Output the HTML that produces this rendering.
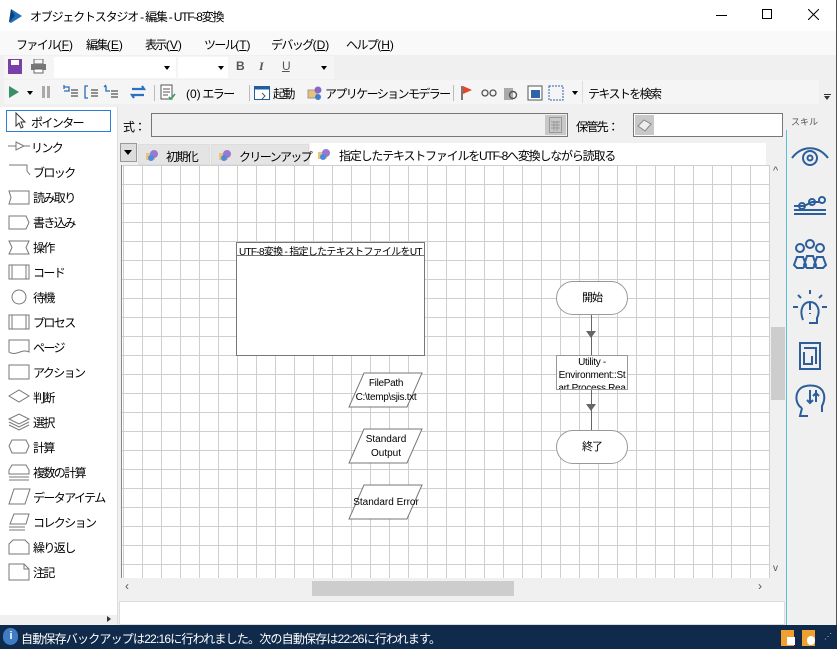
<!DOCTYPE html>
<html><head><meta charset="utf-8"><style>
*{margin:0;padding:0;box-sizing:border-box}
body{width:837px;height:649px;overflow:hidden;background:#f0f0f0;font-family:"Liberation Sans","Noto Sans CJK JP",sans-serif;font-size:12px;letter-spacing:-1px;color:#000;position:relative}
.a{position:absolute}
.t{white-space:nowrap}
.l{letter-spacing:-1.6px}
.n{letter-spacing:0}
</style></head><body>
<!-- title bar -->
<div class="a" style="left:0;top:0;width:837px;height:31px;background:#fff"></div>
<svg class="a" style="left:9px;top:8px" width="14" height="16"><path d="M2 1 L13 8 L2 15 L0 14 Z" fill="#1f6fb8"/><path d="M2 1 L6 8 L0 14 Z" fill="#0d3f7a"/></svg>
<div class="a t" style="left:30px;top:8px;letter-spacing:-1.2px">オブジェクトスタジオ  - 編集 - UTF-8変換</div>
<div class="a" style="left:716px;top:15px;width:11px;height:1px;background:#000"></div>
<div class="a" style="left:762px;top:9px;width:10px;height:10px;border:1px solid #000"></div>
<svg class="a" style="left:808px;top:9px" width="11" height="11"><path d="M0 0L11 11M11 0L0 11" stroke="#000" stroke-width="1"/></svg>
<div class="a" style="left:836px;top:0;width:1px;height:649px;background:#555"></div>
<!-- menu -->
<div class="a" style="left:0;top:31px;width:836px;height:24px;background:#f9f9f9"></div>
<div class="a t l" style="left:16px;top:36px">ファイル<span class="n">(<u>F</u>)</span></div>
<div class="a t l" style="left:86px;top:36px">編集<span class="n">(<u>E</u>)</span></div>
<div class="a t l" style="left:145px;top:36px">表示<span class="n">(<u>V</u>)</span></div>
<div class="a t l" style="left:204px;top:36px">ツール<span class="n">(<u>T</u>)</span></div>
<div class="a t l" style="left:271px;top:36px">デバッグ<span class="n">(<u>D</u>)</span></div>
<div class="a t l" style="left:346px;top:36px">ヘルプ<span class="n">(<u>H</u>)</span></div>
<!-- toolbar1 -->
<div class="a" style="left:4px;top:56px;width:330px;height:23px;background:#f5f5f5"></div>
<div class="a" style="left:8px;top:59px;width:14px;height:15px;background:#7b3fa8"></div><div class="a" style="left:11px;top:60px;width:8px;height:5px;background:#fff"></div>
<svg class="a" style="left:31px;top:59px" width="15" height="15"><rect x="3" y="0" width="9" height="5" fill="none" stroke="#666"/><rect x="0" y="5" width="15" height="6" fill="#777"/><rect x="3" y="10" width="9" height="4" fill="#fff" stroke="#666"/></svg>
<div class="a" style="left:54px;top:57px;width:122px;height:21px;background:#fff"></div>
<div class="a" style="left:164px;top:66px;border:3px solid transparent;border-top:4px solid #000"></div>
<div class="a" style="left:178px;top:57px;width:50px;height:21px;background:#fff"></div>
<div class="a" style="left:218px;top:66px;border:3px solid transparent;border-top:4px solid #000"></div>
<div class="a t" style="left:236px;top:59px;font-weight:bold;color:#555;font-size:12px">B</div>
<div class="a t" style="left:259px;top:59px;font-style:italic;font-weight:bold;color:#555;font-size:12px;font-family:'Liberation Serif',serif">I</div>
<div class="a t" style="left:282px;top:59px;text-decoration:underline;color:#555;font-size:12px">U</div>
<div class="a" style="left:321px;top:66px;border:3px solid transparent;border-top:4px solid #000"></div>
<!-- toolbar2 -->
<div class="a" style="left:4px;top:80px;width:815px;height:24px;background:#f5f5f5"></div>
<svg class="a" style="left:8px;top:85px" width="12" height="14"><path d="M1 1L11 7L1 13Z" fill="#3a8e6a"/></svg>
<div class="a" style="left:27px;top:91px;border:3px solid transparent;border-top:4px solid #000"></div>
<div class="a" style="left:42px;top:86px;width:3px;height:12px;background:#aaa"></div><div class="a" style="left:47px;top:86px;width:3px;height:12px;background:#aaa"></div>
<svg class="a" style="left:61px;top:84px" width="90" height="16" fill="none" stroke="#2c6db0" stroke-width="1.3"><path d="M3 3h5v4h-5M3 1v4"/><path d="M10 6h7M10 9h7M10 12h7" stroke="#555"/><path d="M27 2h-3v12h3"/><path d="M30 6h7M30 9h7M30 12h7" stroke="#555"/><path d="M45 2v5h4M45 1l-2 2"/><path d="M50 7h7M50 10h7M50 13h7" stroke="#555"/><path d="M71 5h12l-2-3M83 11h-12l2 3" stroke-width="2.2" stroke="#2a72c0"/></svg>
<div class="a" style="left:154px;top:85px;width:1px;height:16px;background:#bbb"></div>
<svg class="a" style="left:160px;top:84px" width="16" height="17"><rect x="1" y="1" width="11" height="14" fill="#fff" stroke="#555"/><path d="M3 5h7M3 8h7M3 11h5" stroke="#555"/><path d="M9 13l2 2 4-5" stroke="#3a9e5a" stroke-width="1.6" fill="none"/></svg>
<div class="a t l" style="left:186px;top:85px"><span class="n">(0)</span>  エラー</div>
<div class="a" style="left:249px;top:85px;width:1px;height:16px;background:#bbb"></div>
<svg class="a" style="left:254px;top:85px" width="16" height="16"><rect x="0.5" y="1.5" width="15" height="13" fill="#fff" stroke="#1f5f9f"/><rect x="0.5" y="1.5" width="15" height="3" fill="#1f5f9f"/><path d="M8 8l3 3-3 3" stroke="#555" fill="none"/></svg>
<div class="a t l" style="left:273px;top:85px">起動</div>
<svg class="a" style="left:307px;top:85px" width="16" height="16"><rect x="1" y="5" width="9" height="8" fill="#e8c27a" stroke="#999"/><circle cx="11" cy="5" r="3.5" fill="#8b66c4"/><circle cx="11" cy="12" r="3" fill="#3f80cc"/></svg>
<div class="a t l" style="left:325px;top:85px">アプリケーションモデラー</div>
<div class="a" style="left:453px;top:85px;width:1px;height:16px;background:#bbb"></div>
<svg class="a" style="left:460px;top:85px" width="120" height="16"><rect x="1" y="1" width="2" height="14" fill="#777"/><path d="M3 1L12 5L3 9Z" fill="#e4472a"/><circle cx="25" cy="8" r="3" fill="none" stroke="#555" stroke-width="1.3"/><circle cx="33" cy="8" r="3" fill="none" stroke="#555" stroke-width="1.3"/><rect x="44" y="3" width="9" height="12" fill="#aaa"/><circle cx="53" cy="10" r="3.5" fill="none" stroke="#555" stroke-width="1.4"/><rect x="68" y="1" width="14" height="14" fill="#fff" stroke="#555"/><rect x="71" y="5" width="9" height="8" fill="#2d63a8"/><rect x="89" y="1" width="14" height="14" fill="none" stroke="#2d63a8" stroke-dasharray="2 1"/></svg>
<div class="a" style="left:572px;top:91px;border:3px solid transparent;border-top:4px solid #000"></div>
<div class="a" style="left:582px;top:81px;width:1px;height:22px;background:#ddd"></div>
<div class="a t l" style="left:588px;top:85px">テキストを検索</div>
<div class="a" style="left:824px;top:96px;border:3px solid transparent;border-top:4px solid #333"></div><div class="a" style="left:824px;top:94px;width:7px;height:1px;background:#333"></div>
<!-- left panel -->
<div class="a" style="left:0;top:107px;width:117px;height:508px;background:#fff"></div>
<div class="a" style="left:0;top:615px;width:117px;height:10px;background:#f0f0f0"></div>
<div class="a" style="left:6px;top:110px;width:105px;height:22px;border:1px solid #2a7fd4"></div>
<div class="a" style="left:117px;top:107px;width:1px;height:518px;background:#ddd"></div>
<svg class="a" style="left:5px;top:112px" width="110" height="472" fill="none" stroke="#777">
<path d="M11 1v13l3-3 2 5 2-1-2-5h4z" fill="#fff" stroke="#333"/>
<path d="M3 34h8M11 30l8 4-8 4zM19 34h6"/>
<path d="M4 53h18v6M22 59l3 4" />
<path d="M4 79h20v13h-20l2-6.5z"/>
<path d="M4 104h17l3 6.5-3 6.5h-17z"/>
<path d="M4 129h20l-3 6.5 3 6.5h-20l3-6.5z"/>
<path d="M4 153h20v14h-20zM7 153v14M21 153v14"/>
<circle cx="14" cy="185" r="7"/>
<path d="M4 203h20v14h-20zM7 203v14M21 203v14"/>
<path d="M4 228h20v12c-7 -4-13 5-20 0z"/>
<path d="M4 253h20v14h-20z"/>
<path d="M4 284l10-6 10 6-10 6z"/>
<path d="M4 307l10-5 10 5-10 5zM4 310l10 5 10-5M4 313l10 5 10-5"/>
<path d="M7 328h14l3 6-3 7h-14l-3-7z"/>
<path d="M7 353h14l3 5v4h-20v-4zM4 365h20M4 368h20"/>
<path d="M9 377h16l-5 15h-16z"/>
<path d="M9 402h15l-3 10h-16zM4 415h16M4 418h16"/>
<path d="M8 428h12l4 4v10h-20v-10z"/>
<path d="M4 452h15l5 5v11h-20zM19 452v5h5"/>
</svg>
<div class="l">
<div class="a t" style="left:31px;top:114px">ポインター</div>
<div class="a t" style="left:31px;top:139px">リンク</div>
<div class="a t" style="left:33px;top:164px">ブロック</div>
<div class="a t" style="left:33px;top:189px">読み取り</div>
<div class="a t" style="left:33px;top:214px">書き込み</div>
<div class="a t" style="left:33px;top:239px">操作</div>
<div class="a t" style="left:33px;top:264px">コード</div>
<div class="a t" style="left:33px;top:289px">待機</div>
<div class="a t" style="left:33px;top:314px">プロセス</div>
<div class="a t" style="left:33px;top:339px">ページ</div>
<div class="a t" style="left:33px;top:364px">アクション</div>
<div class="a t" style="left:33px;top:389px">判断</div>
<div class="a t" style="left:33px;top:414px">選択</div>
<div class="a t" style="left:33px;top:439px">計算</div>
<div class="a t" style="left:33px;top:464px">複数の計算</div>
<div class="a t" style="left:33px;top:489px">データアイテム</div>
<div class="a t" style="left:33px;top:514px">コレクション</div>
<div class="a t" style="left:33px;top:539px">繰り返し</div>
<div class="a t" style="left:33px;top:564px">注記</div>
</div>
<div class="a" style="left:107px;top:616px;border:3px solid transparent;border-left:4px solid #333"></div>
<!-- formula row -->
<div class="a t" style="left:123px;top:118px">式：</div>
<div class="a" style="left:151px;top:113px;width:417px;height:24px;border:1px solid #777;background:#f0f0f0"></div>
<div class="a" style="left:545px;top:115px;width:21px;height:20px;background:#c8c8c8"></div>
<svg class="a" style="left:549px;top:117px" width="13" height="16"><rect x="0.5" y="0.5" width="12" height="15" fill="none" stroke="#999"/><path d="M2 5h9M2 8h9M2 11h9M5 4v10M8 4v10" stroke="#999"/></svg>
<div class="a t l" style="left:576px;top:118px">保管先：</div>
<div class="a" style="left:633px;top:113px;width:150px;height:24px;border:1px solid #777;background:#fff"></div>
<div class="a" style="left:635px;top:115px;width:19px;height:20px;background:#c8c8c8"></div>
<svg class="a" style="left:637px;top:118px" width="15" height="14"><path d="M1 8l6-6 7 4-6 7z" fill="#eee" stroke="#888"/></svg>
<!-- skills -->
<div class="a t" style="left:791px;top:115px;font-size:9px;color:#555;letter-spacing:0">スキル</div>
<div class="a" style="left:786px;top:130px;width:1px;height:495px;background:#5bc0d4"></div>
<svg class="a" style="left:790px;top:140px" width="40" height="285" fill="none" stroke="#2b5e9a" stroke-width="2">
<path d="M2 18c10-13 26-13 36 0"/><circle cx="20" cy="18" r="7"/><circle cx="20" cy="18" r="2.5"/>
<path d="M4 70h32M4 74h32M4 66h10l8-4 8 0"/><circle cx="12" cy="66" r="3"/><circle cx="22" cy="62" r="3"/><circle cx="32" cy="60" r="3"/>
<circle cx="10" cy="108" r="4"/><circle cx="20" cy="104" r="4"/><circle cx="30" cy="108" r="4"/><path d="M4 125l3-8h6l3 8-3 3h-6zM14 125l3-9h6l3 9-3 3h-6zM24 125l3-8h6l3 8-3 3h-6z"/>
<path d="M20 150v4M8 155l3 3M32 155l-3 3M3 167h5M32 167h5M20 163v7M20 173v1M13 180c-4-10 0-18 7-18s11 8 7 16v5h-8"/>
<path d="M10 203h20v26h-20zM14 208h12v16M14 212v12h8v-8"/>
<path d="M12 275c-8-4-8-20 4-22 4-1 12-1 16 4 4 6 2 12 0 16v6M12 275l-2 8h8M20 257v12M26 257v12M17 267l3 3 3-3M23 263l3-3 3 3" transform="translate(0,-7)"/>
</svg>
<!-- tabs -->
<div class="a" style="left:120px;top:143px;width:17px;height:19px;background:#ddd;border:1px solid #999"></div>
<div class="a" style="left:124px;top:150px;border:4px solid transparent;border-top:5px solid #000"></div>
<div class="a" style="left:138px;top:144px;width:72px;height:21px;background:#e4e4e4;border:1px solid #ddd"></div>
<div class="a" style="left:211px;top:144px;width:98px;height:21px;background:#e4e4e4;border:1px solid #ddd"></div>
<div class="a" style="left:310px;top:143px;width:310px;height:22px;background:#fff"></div>
<div class="a" style="left:620px;top:143px;width:146px;height:22px;background:#fff"></div>
<svg class="a" style="left:145px;top:148px" width="190" height="14"><g id="i"><rect x="1" y="5" width="9" height="7" fill="#e9c47c"/><circle cx="9" cy="6" r="4" fill="#9a78cf"/><circle cx="6" cy="10" r="3" fill="#4b8be0"/></g><use href="#i" x="73"/><use href="#i" x="172" y="-1"/></svg>
<div class="a t l" style="left:166px;top:148px">初期化</div>
<div class="a t l" style="left:239px;top:148px">クリーンアップ</div>
<div class="a t l" style="left:339px;top:147px;letter-spacing:-1.2px">指定したテキストファイルをUTF-8へ変換しながら読取る</div>
<!-- canvas -->
<div class="a" style="left:121px;top:165px;width:649px;height:413px;background-color:#fff;background-image:linear-gradient(to right,#cfcfcf 1px,transparent 1px),linear-gradient(to bottom,#cfcfcf 1px,transparent 1px);background-size:19px 19px;background-position:1px 0;border-left:1px solid #888"></div>
<div class="a" style="left:770px;top:165px;width:16px;height:413px;background:#f0f0f0"></div>
<div class="a" style="left:771px;top:327px;width:14px;height:73px;background:#cdcdcd"></div>
<div class="a t" style="left:773px;top:165px;font-size:11px;color:#555">^</div>
<div class="a t" style="left:773px;top:563px;font-size:10px;color:#555">v</div>
<div class="a" style="left:121px;top:578px;width:649px;height:18px;background:#f0f0f0"></div>
<div class="a" style="left:312px;top:581px;width:202px;height:15px;background:#cdcdcd"></div>
<div class="a t" style="left:125px;top:579px;font-size:12px;color:#555">‹</div>
<div class="a t" style="left:758px;top:579px;font-size:12px;color:#555">›</div>
<div class="a" style="left:119px;top:601px;width:666px;height:24px;background:#fff;border:1px solid #ddd"></div>
<!-- diagram -->
<div class="a" style="left:236px;top:242px;width:189px;height:114px;border:1px solid #777;background:#fff"></div>
<div class="a" style="left:236px;top:255px;width:189px;height:1px;background:#777"></div>
<div class="a t" style="left:239px;top:243px;font-size:10px;letter-spacing:-0.7px">UTF-8変換 - 指定したテキストファイルをUT</div>
<svg class="a" style="left:348px;top:372px" width="76" height="150" fill="#fff" stroke="#777"><path d="M16 1h58l-15 34h-58zM16 57h58l-15 34h-58zM16 113h58l-15 34h-58z"/></svg>
<div class="a t" style="left:350px;top:377px;width:72px;text-align:center;font-size:10px;line-height:14px;letter-spacing:-0.3px">FilePath<br>C:\temp\sjis.txt</div>
<div class="a t" style="left:350px;top:433px;width:72px;text-align:center;font-size:10px;line-height:14px;letter-spacing:0">Standard<br>Output</div>
<div class="a t" style="left:350px;top:497px;width:72px;text-align:center;font-size:10px;letter-spacing:0">Standard Error</div>
<div class="a" style="left:591px;top:314px;width:1px;height:117px;background:#666"></div>
<div class="a" style="left:586px;top:331px;border:5px solid transparent;border-top:7px solid #666"></div>
<div class="a" style="left:586px;top:404px;border:5px solid transparent;border-top:7px solid #666"></div>
<div class="a" style="left:556px;top:281px;width:72px;height:34px;border:1px solid #999;border-radius:17px;background:#fff;text-align:center;line-height:32px;font-size:11px">開始</div>
<div class="a" style="left:556px;top:355px;width:72px;height:35px;border:1px solid #999;background:#fff;text-align:center;font-size:10px;line-height:13px;overflow:hidden;letter-spacing:-0.3px;word-break:break-all">Utility -<br>Environment::St<br>art Process Rea</div>
<div class="a" style="left:556px;top:430px;width:72px;height:34px;border:1px solid #999;border-radius:17px;background:#fff;text-align:center;line-height:32px;font-size:11px">終了</div>
<!-- status -->
<div class="a" style="left:0;top:625px;width:837px;height:24px;background:#0f2a4a"></div>
<div class="a" style="left:3px;top:628px;width:15px;height:17px;border-radius:8px;background:#3e7cc6;color:#fff;font-size:11px;text-align:center;line-height:17px;font-weight:bold">i</div>
<div class="a t" style="left:21px;top:630px;color:#fff;letter-spacing:-0.8px">自動保存バックアップは22:16に行われました。次の自動保存は22:26に行われます。</div>
<div class="a" style="left:781px;top:630px;width:13px;height:16px;background:#f0a030"></div><div class="a" style="left:787px;top:637px;width:8px;height:8px;background:#fff"></div>
<div class="a" style="left:802px;top:630px;width:13px;height:16px;background:#f0a030"></div><div class="a" style="left:807px;top:636px;width:8px;height:9px;background:#fff;border-radius:4px"></div>
<div class="a t" style="left:824px;top:632px;color:#ccc;font-size:8px">⋰</div>
</body></html>
